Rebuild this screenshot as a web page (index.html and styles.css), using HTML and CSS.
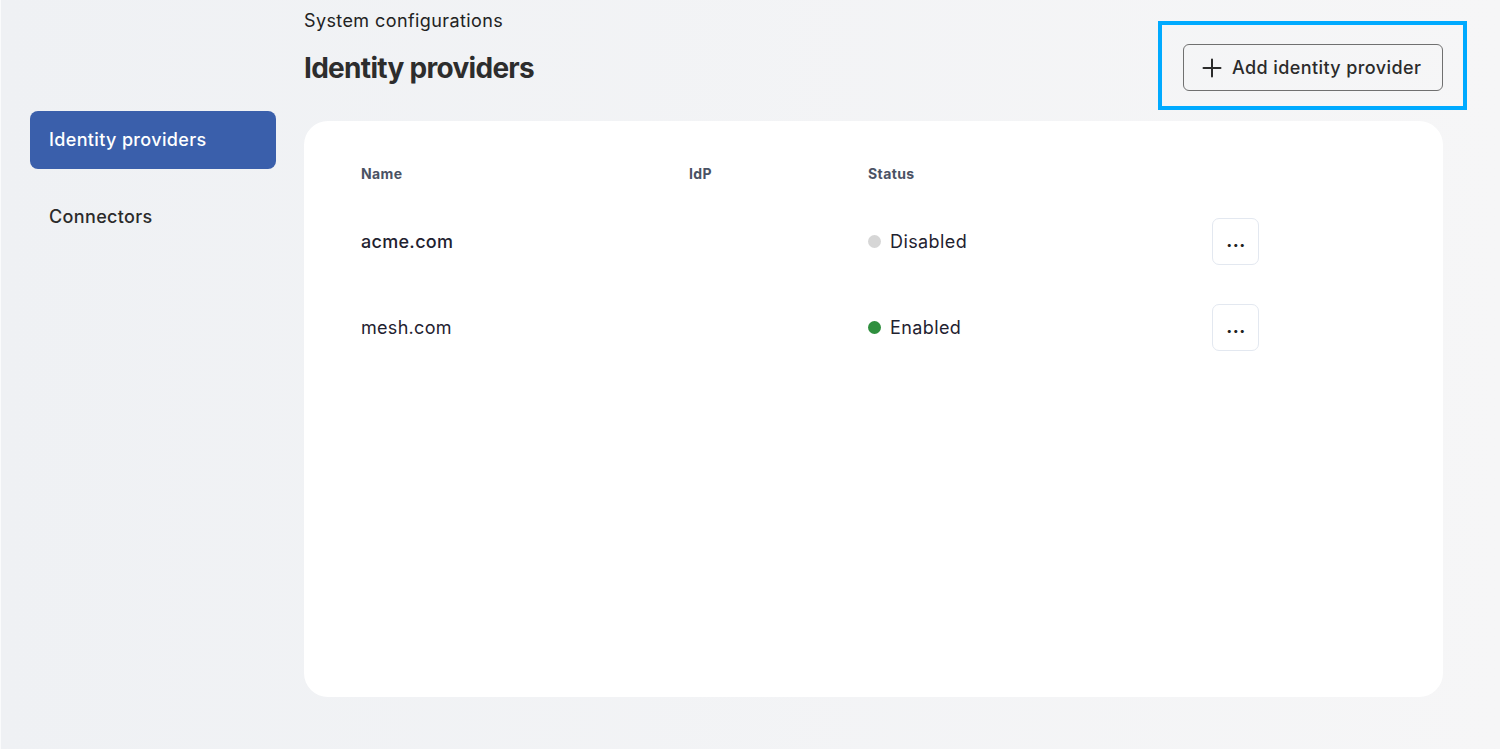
FILE: index.html
```html
<!DOCTYPE html>
<html lang="en">
<head>
    <meta charset="UTF-8">
    <meta name="viewport" content="width=device-width, initial-scale=1.0">
    <title>Identity providers</title>
    <link rel="stylesheet" href="styles.css">
</head>
<body>
    <div class="layout">
        <nav class="sidebar">
            <a class="nav-item active" href="#">Identity providers</a>
            <a class="nav-item" href="#">Connectors</a>
        </nav>

        <main class="content">
            <div class="page-head">
                <div class="titles">
                    <p class="crumb">System configurations</p>
                    <h1>Identity providers</h1>
                </div>
                <div class="highlight">
                    <button class="add-btn">
                        <svg width="20" height="20" viewBox="0 0 20 20" fill="none" stroke="#2b2b2b" stroke-width="2" stroke-linecap="round">
                            <path d="M10 1.5v17M1.5 10h17"/>
                        </svg>
                        Add identity provider
                    </button>
                </div>
            </div>

            <section class="card">
                <div class="table">
                    <div class="row head">
                        <span>Name</span>
                        <span>IdP</span>
                        <span>Status</span>
                        <span></span>
                    </div>
                    <div class="row">
                        <span class="name strong">acme.com</span>
                        <span></span>
                        <span class="status"><i class="dot off"></i>Disabled</span>
                        <button class="more">...</button>
                    </div>
                    <div class="row">
                        <span class="name">mesh.com</span>
                        <span></span>
                        <span class="status"><i class="dot on"></i>Enabled</span>
                        <button class="more">...</button>
                    </div>
                </div>
            </section>
        </main>
    </div>
</body>
</html>
```

FILE: styles.css
```css
html, body {
    height: 100%;
}
body {
    margin: 0;
    font-family: Inter, "Liberation Sans", sans-serif;
    color: #222;
    background: linear-gradient(to right, #eff1f4, #f6f6f7);
    border-left: 1px solid #fafbfc;
    box-sizing: border-box;
}
.layout {
    display: flex;
    height: 100%;
}
.sidebar {
    width: 246px;
    padding: 111px 0 0 29px;
    display: flex;
    flex-direction: column;
    gap: 19px;
    flex-shrink: 0;
}
.nav-item {
    display: block;
    height: 58px;
    line-height: 58px;
    padding-left: 19px;
    border-radius: 8px;
    font-size: 18px;
    font-weight: 500;
    letter-spacing: 0.35px;
    color: #2b2b2b;
    text-decoration: none;
}
.nav-item.active {
    background-color: #3a5fab;
    color: #fff;
}
.content {
    margin-left: 28px;
    width: 1139px;
    display: flex;
    flex-direction: column;
}
.page-head {
    display: flex;
    justify-content: space-between;
    align-items: flex-start;
    height: 121px;
}
.crumb {
    margin: 10px 0 0;
    font-size: 18px;
    line-height: 22px;
    letter-spacing: 0.4px;
    color: #222;
}
h1 {
    margin: 19px 0 0;
    font-size: 28px;
    line-height: 34px;
    font-weight: 700;
    color: #2d2d2d;
    letter-spacing: -0.7px;
}
.highlight {
    margin: 21px -24px 0 0;
    border: 4px solid #00aaff;
    padding: 19px 20px 15px 21px;
}
.add-btn {
    display: flex;
    align-items: center;
    gap: 10px;
    height: 47px;
    width: 260px;
    padding: 0 18px;
    border: 1px solid #707070;
    border-radius: 6px;
    background: transparent;
    font-family: inherit;
    font-size: 18px;
    font-weight: 500;
    letter-spacing: 0.4px;
    color: #2b2b2b;
    cursor: pointer;
}
.card {
    height: 576px;
    background: #fff;
    border-radius: 24px;
}
.table {
    padding: 40px 0 0 57px;
}
.row {
    display: grid;
    grid-template-columns: 328px 179px 344px 47px;
    align-items: center;
    height: 86px;
}
.row.head {
    height: 24px;
    margin-bottom: 13px;
    font-size: 14px;
    font-weight: 700;
    color: #4a5264;
    letter-spacing: 0.4px;
}
.name {
    font-size: 18px;
    letter-spacing: 0.3px;
    color: #1f2230;
}
.name.strong {
    font-weight: 500;
}
.status {
    display: flex;
    align-items: center;
    gap: 9px;
    font-size: 18px;
    letter-spacing: 0.4px;
    color: #1f2230;
}
.dot {
    width: 13px;
    height: 13px;
    border-radius: 50%;
}
.dot.off {
    background: #d6d6d6;
}
.dot.on {
    background: #2f8f3e;
}
.more {
    width: 47px;
    height: 47px;
    border: 1px solid #e3e8f0;
    border-radius: 7px;
    background: #fff;
    font-family: inherit;
    font-size: 17px;
    font-weight: 800;
    line-height: 1;
    color: #222;
    padding: 0 0 0 1px;
    letter-spacing: 0.5px;
}
```
